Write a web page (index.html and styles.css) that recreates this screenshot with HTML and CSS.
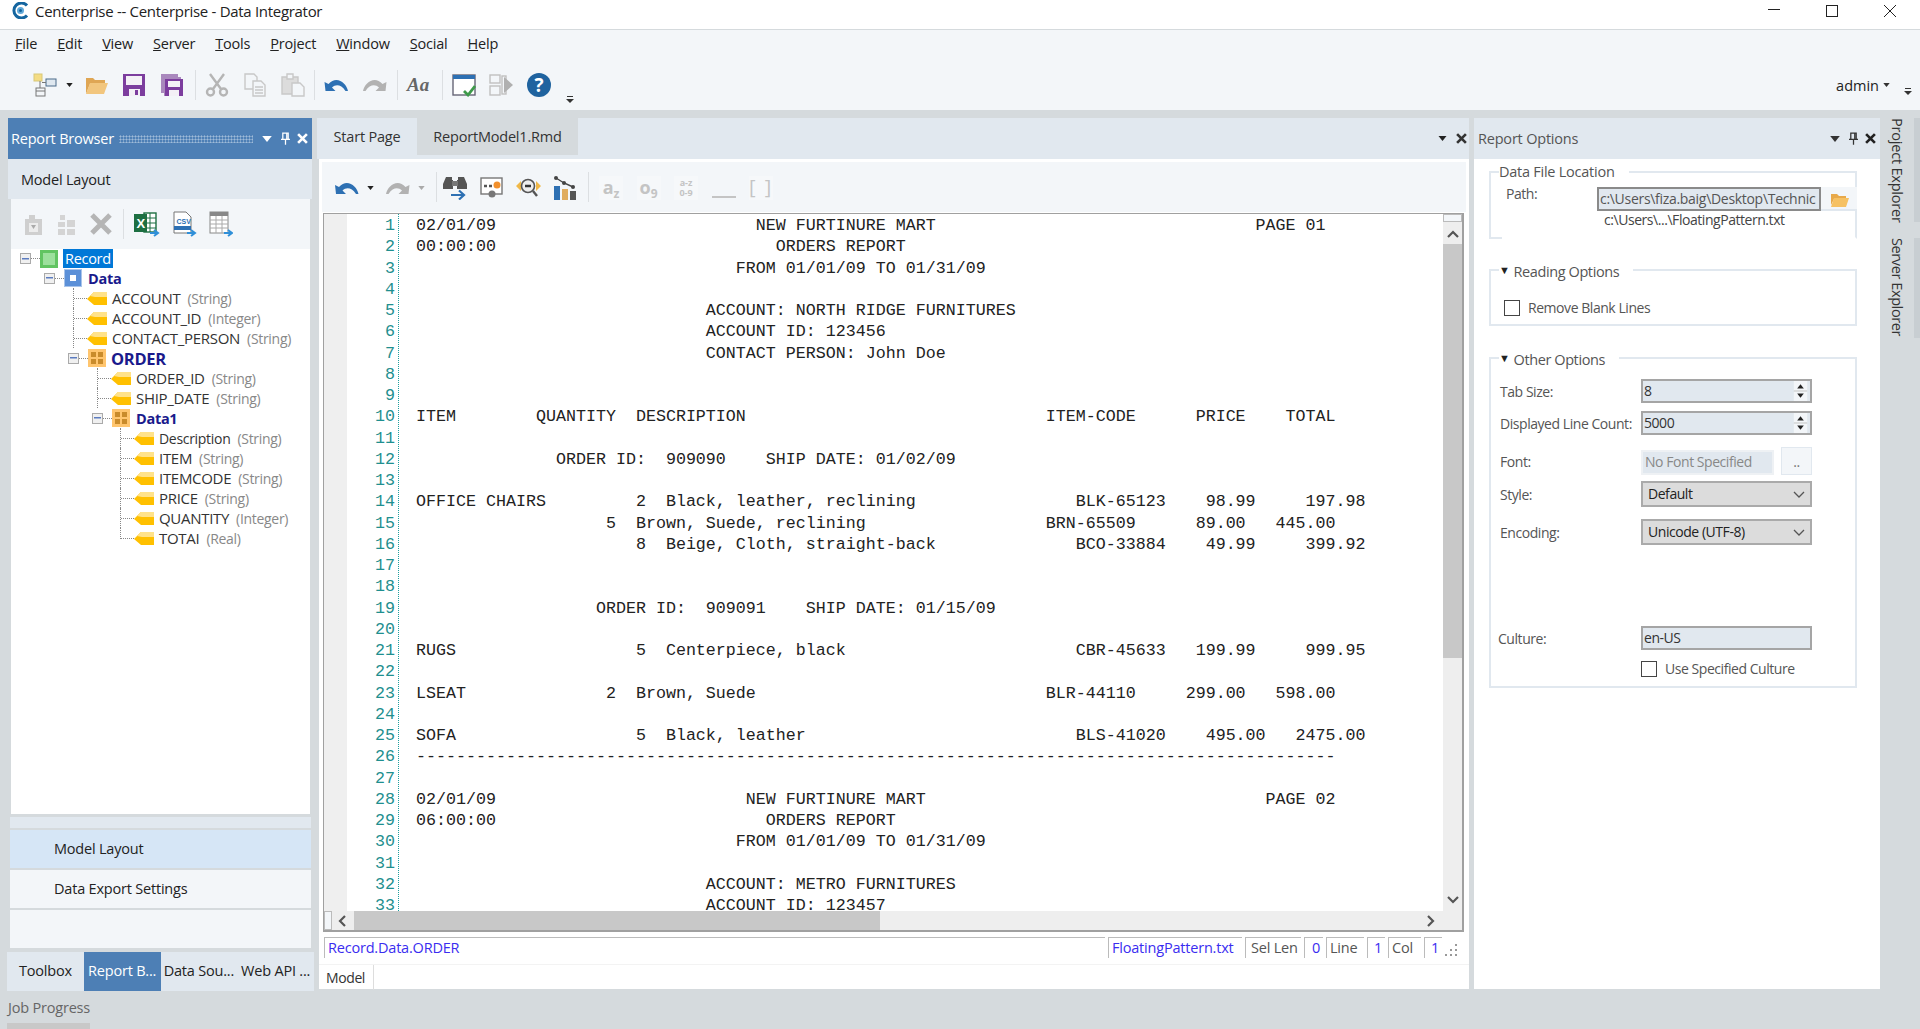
FILE: index.html
```html
<!doctype html>
<html lang="en">
    <head>
        <meta charset="UTF-8" />
        <title>Centerprise -- Centerprise - Data Integrator</title>
        <link rel="stylesheet" href="styles.css">
    </head>
    <body>
        <svg class="defs" width="0" height="0">
            <symbol id="tag" viewBox="0 0 20 14">
                <polygon points="0,8 7,1 20,1 20,14 7,14" fill="#ffc000" />
                <polygon points="3,5 7,1 20,1 20,6 8,6" fill="#ffe28a" />
            </symbol>
            <symbol id="grid" viewBox="0 0 18 18">
                <rect width="18" height="18" fill="#ffc56e" />
                <rect x="3" y="3" width="5" height="5" fill="#c98b2b" />
                <rect x="10" y="3" width="5" height="5" fill="#c98b2b" />
                <rect x="3" y="10" width="5" height="5" fill="#c98b2b" />
                <rect x="10" y="10" width="5" height="5" fill="#c98b2b" />
            </symbol>
            <symbol id="undo" viewBox="0 0 24 24">
                <path d="M0 9l1 9h10l-3.5-3.5c4-3.500 9-3 13.500 3.500h2.500C22 10 12 2 4 11z" />
            </symbol>
            <symbol id="redo" viewBox="0 0 24 24">
                <path d="M24 9l-1 9H13l3.500-3.500c-4-3.500-9-3-13.500 3.500H.5C2 10 12 2 20 11z" />
            </symbol>
            <symbol id="caret" viewBox="0 0 8 5">
                <polygon points="0,0 8,0 4,5" />
            </symbol>
            <symbol id="closex" viewBox="0 0 10 10">
                <path d="M1 1l8 8M9 1l-8 8" stroke="currentColor" stroke-width="2.4" fill="none" />
            </symbol>
            <symbol id="pin" viewBox="0 0 10 14">
                <path d="M2 1h6v7H2zM0 8h10M5 8v6M6.400 1v7" stroke="currentColor" stroke-width="1.400" fill="none" />
            </symbol>
            <symbol id="chev" viewBox="0 0 12 7">
                <path d="M1 1l5 5 5-5" stroke="#555" stroke-width="1.300" fill="none" />
            </symbol>
            <symbol id="spin" viewBox="0 0 16 24">
                <rect width="16" height="24" fill="#f3f6f9" />
                <path d="M0 12h16" stroke="#bbb" />
                <polygon points="4,9 12,9 8,4" fill="#222" />
                <polygon points="4,15 12,15 8,20" fill="#222" />
            </symbol>
        </svg>

        <header class="titlebar">
            <svg class="app-logo" width="19" height="17" viewBox="0 0 19 17">
                <path d="M16 3.500a7.500 7.500 0 1 0 0 10" stroke="#14659f" stroke-width="3" fill="none" />
                <circle cx="9.500" cy="8.500" r="3.500" fill="#5fa8d8" />
                <circle cx="9.500" cy="8.500" r="1.500" fill="#14659f" />
            </svg>
            <span class="app-title">Centerprise -- Centerprise - Data Integrator</span>
            <div class="window-controls">
                <svg width="12" height="12" viewBox="0 0 12 12"><path d="M0 4.500h12" stroke="#222" /></svg>
                <svg width="12" height="12" viewBox="0 0 12 12"><rect x=".5" y=".5" width="11" height="11" fill="none" stroke="#222" /></svg>
                <svg width="12" height="12" viewBox="0 0 12 12"><path d="M0 0l12 12M12 0L0 12" stroke="#222" /></svg>
            </div>
        </header>

        <nav class="menubar">
            <span><u>F</u>ile</span>
            <span><u>E</u>dit</span>
            <span><u>V</u>iew</span>
            <span><u>S</u>erver</span>
            <span><u>T</u>ools</span>
            <span><u>P</u>roject</span>
            <span><u>W</u>indow</span>
            <span><u>S</u>ocial</span>
            <span><u>H</u>elp</span>
        </nav>

        <div class="toolbar">
            <span class="grip"></span>
            <svg class="ti" width="24" height="24" viewBox="0 0 24 24">
                <rect x="1" y="1" width="8" height="7" fill="#f4dc84" stroke="#d8c878" />
                <rect x="13" y="6" width="10" height="7" fill="#dfe8f0" stroke="#4a6a8a" />
                <rect x="3" y="15" width="9" height="8" fill="#f3f6f9" stroke="#777" />
                <path d="M3 18h9M7 8v7M9 9.500h4" stroke="#777" />
            </svg>
            <svg class="ti-caret" width="7" height="4" fill="#222"><use href="#caret" /></svg>
            <svg class="ti" width="24" height="24" viewBox="0 0 24 24">
                <path d="M2 5h7l2 2h10v4H6L2 21z" fill="#dfa654" />
                <path d="M6 10h18l-4 11H2z" fill="#f2c67e" />
            </svg>
            <svg class="ti" width="24" height="24" viewBox="0 0 24 24">
                <path d="M1 1h22v22H1z" fill="#7c3d9e" />
                <rect x="4" y="3" width="16" height="9" fill="#f3f0f6" />
                <rect x="7" y="16" width="11" height="7" fill="#f3f0f6" />
                <rect x="13" y="17" width="3" height="5" fill="#7c3d9e" />
            </svg>
            <svg class="ti" width="24" height="24" viewBox="0 0 24 24">
                <path d="M1 1h17v3h3v3h2v16H4v-3H1z" fill="#a988bd" />
                <path d="M5 6h18v17H5z" fill="#7c3d9e" />
                <rect x="8" y="8" width="12" height="6" fill="#f3f0f6" />
                <rect x="9" y="17" width="10" height="6" fill="#f3f0f6" />
            </svg>
            <span class="sep"></span>
            <svg class="ti" width="24" height="24" viewBox="0 0 24 24" fill="none" stroke="#b5b5b5" stroke-width="2.400">
                <path d="M5 1l11 15M19 1L8 16" />
                <circle cx="5.500" cy="19" r="3.500" />
                <circle cx="18.500" cy="19" r="3.500" />
            </svg>
            <svg class="ti" width="24" height="24" viewBox="0 0 24 24" fill="#f3f6f9" stroke="#c8c8c8" stroke-width="1.400">
                <path d="M2 1h9l3 3v12H2z" />
                <path d="M10 8h8l4 4v11H10z" />
                <path d="M12 14h8M12 17h8M12 20h8" />
            </svg>
            <svg class="ti r12" width="24" height="24" viewBox="0 0 24 24" fill="#f3f6f9" stroke="#c8c8c8" stroke-width="1.400">
                <path d="M1 4h16v17H1z" fill="#dcdcdc" />
                <path d="M6 1h6v5H6z" />
                <path d="M11 10h8l4 4v9H11z" />
            </svg>
            <span class="sep"></span>
            <svg class="ti r13" width="25" height="24" fill="#2d70b3"><use href="#undo" /></svg>
            <svg class="ti r13" width="25" height="24" fill="#b2b2b2"><use href="#redo" /></svg>
            <span class="sep"></span>
            <span class="font-btn">Aa</span>
            <span class="sep"></span>
            <svg class="ti r13" width="24" height="24" viewBox="0 0 24 24">
                <rect x="1" y="2" width="22" height="20" fill="#fff" stroke="#667" stroke-width="1.400" />
                <rect x="1" y="2" width="22" height="4" fill="#2d70b3" />
                <path d="M12 18l4 4 7-9" stroke="#3d9a4a" stroke-width="2.800" fill="none" />
            </svg>
            <svg class="ti r13" width="24" height="24" viewBox="0 0 24 24" fill="#f3f6f9" stroke="#c0c0c0" stroke-width="1.400">
                <rect x="1" y="2" width="10" height="8" />
                <rect x="1" y="13" width="10" height="9" />
                <rect x="13" y="3" width="4" height="18" />
                <polygon points="15,4 24,12 15,20" fill="#b0b0b0" stroke="none" />
            </svg>
            <span class="help-btn">?</span>
            <svg class="overflow" width="8" height="8" viewBox="0 0 8 8"><path d="M1 0h6v1H1zM0 3h8L4 7z" fill="#333" /></svg>
            <div class="user-area">
                <span class="grip"></span>
                <span class="user-name">admin</span>
                <svg width="7" height="4" fill="#333"><use href="#caret" /></svg>
                <svg class="overflow" width="8" height="8" viewBox="0 0 8 8"><path d="M1 0h6v1H1zM0 3h8L4 7z" fill="#333" /></svg>
            </div>
        </div>

        <main class="workspace">
            <!-- left dock -->
            <section class="left-dock">
                <div class="dock-head active">
                    <span>Report Browser</span>
                    <span class="dots"></span>
                    <svg width="10" height="6" fill="#fff"><use href="#caret" /></svg>
                    <svg class="pin" width="9" height="13"><use href="#pin" /></svg>
                    <svg class="x" width="11" height="11"><use href="#closex" /></svg>
                </div>
                <div class="sub-head">Model Layout</div>
                <div class="left-toolbar">
                    <svg width="19" height="24" viewBox="0 0 19 24" fill="#cfcfcf">
                        <path d="M1 7h4V3h6v4h7v16H1z" />
                        <rect x="5" y="11" width="9" height="9" fill="#ececec" />
                        <polygon points="7,13 12,13 9.500,17" fill="#aaa" />
                    </svg>
                    <svg class="gap-l" width="19" height="24" viewBox="0 0 19 24" fill="#d4d4d4">
                        <path d="M3 8V3h5v5zM10 8h8v7h-8zM1 10h7v5H1zM1 17h7v6H1zM10 17h8v6h-8z" />
                    </svg>
                    <svg class="gap-l" width="22" height="22" viewBox="0 0 22 22" fill="none" stroke="#b5b5b5" stroke-width="5">
                        <path d="M2 2l18 18M20 2L2 20" />
                    </svg>
                    <span class="sep"></span>
                    <svg width="26" height="26" viewBox="0 0 26 26">
                        <rect x="10" y="2" width="12" height="19" fill="#fff" stroke="#1d6f42" stroke-width="1.400" />
                        <path d="M10 7h12M10 12h12M10 17h12M16 2v19" stroke="#1d6f42" />
                        <rect x="0" y="3" width="13" height="18" fill="#1d6f42" />
                        <text x="2.500" y="16.500" class="xl">X</text>
                        <path d="M16 22h7M20 19l4 3-4 3" stroke="#2f8fd8" stroke-width="2" fill="none" />
                    </svg>
                    <svg class="gap-m" width="25" height="26" viewBox="0 0 25 26">
                        <path d="M2 1h12l5 5v16H2z" fill="#fff" stroke="#777" />
                        <text x="4.500" y="13" class="csv">CSV</text>
                        <rect x="2" y="15" width="17" height="4" fill="#2d70b3" />
                        <path d="M15 22h7M19 19l4 3-4 3" stroke="#2f8fd8" stroke-width="2" fill="none" />
                    </svg>
                    <svg class="gap-m" width="24" height="26" viewBox="0 0 24 26">
                        <rect x="1" y="1" width="18" height="21" fill="#fff" stroke="#888" />
                        <rect x="1" y="1" width="18" height="4" fill="#888" />
                        <path d="M1 9h18M1 13h18M1 17h18M7 5v17M13 5v17" stroke="#aaa" />
                        <path d="M15 22h7M19 19l4 3-4 3" stroke="#2f8fd8" stroke-width="2" fill="none" />
                    </svg>
                </div>
                <div class="tree">
                    <div class="node lv0">
                        <span class="expander"></span><span class="link"></span>
                        <span class="box-icon green"></span>
                        <span class="node-name selected">Record</span>
                    </div>
                    <div class="node lv1">
                        <span class="expander"></span><span class="link"></span>
                        <span class="box-icon blue"></span>
                        <span class="node-name strong">Data</span>
                    </div>
                    <div class="node lv2"><span class="tick"></span><svg class="tag"><use href="#tag" /></svg><span class="field">ACCOUNT</span><span class="ftype">(String)</span></div>
                    <div class="node lv2"><span class="tick"></span><svg class="tag"><use href="#tag" /></svg><span class="field">ACCOUNT_ID</span><span class="ftype">(Integer)</span></div>
                    <div class="node lv2"><span class="tick"></span><svg class="tag"><use href="#tag" /></svg><span class="field">CONTACT_PERSON</span><span class="ftype">(String)</span></div>
                    <div class="node lv2b">
                        <span class="expander"></span><span class="link"></span>
                        <svg class="grid-icon"><use href="#grid" /></svg>
                        <span class="node-name strong caps">ORDER</span>
                    </div>
                    <div class="node lv3"><span class="tick"></span><svg class="tag"><use href="#tag" /></svg><span class="field">ORDER_ID</span><span class="ftype">(String)</span></div>
                    <div class="node lv3"><span class="tick"></span><svg class="tag"><use href="#tag" /></svg><span class="field">SHIP_DATE</span><span class="ftype">(String)</span></div>
                    <div class="node lv3b">
                        <span class="expander"></span><span class="link"></span>
                        <svg class="grid-icon"><use href="#grid" /></svg>
                        <span class="node-name strong">Data1</span>
                    </div>
                    <div class="node lv4"><span class="tick"></span><svg class="tag"><use href="#tag" /></svg><span class="field mixed">Description</span><span class="ftype">(String)</span></div>
                    <div class="node lv4"><span class="tick"></span><svg class="tag"><use href="#tag" /></svg><span class="field">ITEM</span><span class="ftype">(String)</span></div>
                    <div class="node lv4"><span class="tick"></span><svg class="tag"><use href="#tag" /></svg><span class="field">ITEMCODE</span><span class="ftype">(String)</span></div>
                    <div class="node lv4"><span class="tick"></span><svg class="tag"><use href="#tag" /></svg><span class="field">PRICE</span><span class="ftype">(String)</span></div>
                    <div class="node lv4"><span class="tick"></span><svg class="tag"><use href="#tag" /></svg><span class="field">QUANTITY</span><span class="ftype">(Integer)</span></div>
                    <div class="node lv4"><span class="tick last"></span><svg class="tag"><use href="#tag" /></svg><span class="field">TOTAI</span><span class="ftype">(Real)</span></div>
                </div>
                <div class="split-bar"></div>
                <div class="section-btn current">Model Layout</div>
                <div class="section-btn">Data Export Settings</div>
                <div class="section-btn"></div>
                <div class="dock-tabs">
                    <span class="dock-tab">Toolbox</span>
                    <span class="dock-tab on">Report B...</span>
                    <span class="dock-tab">Data Sou...</span>
                    <span class="dock-tab">Web API ...</span>
                </div>
            </section>

            <!-- editor -->
            <section class="center">
                <div class="doc-tabs">
                    <span class="doc-tab">Start Page</span>
                    <span class="doc-tab cur">ReportModel1.Rmd</span>
                    <svg class="tab-caret" width="9" height="5" fill="#222"><use href="#caret" /></svg>
                    <svg class="tab-close" width="11" height="11"><use href="#closex" /></svg>
                </div>
                <div class="doc-body">
                    <div class="edit-toolbar">
                        <svg width="24" height="24" fill="#2d70b3"><use href="#undo" /></svg>
                        <svg class="small-caret" width="7" height="4" fill="#222"><use href="#caret" /></svg>
                        <svg width="25" height="24" fill="#b2b2b2"><use href="#redo" /></svg>
                        <svg class="small-caret" width="7" height="4" fill="#aaa"><use href="#caret" /></svg>
                        <span class="sep first"></span>
                        <svg width="24" height="24" viewBox="0 0 24 24">
                            <path d="M3 1h6v3h1v9H0V8zM15 1h6l3 7v5H14V4h1z" fill="#555" />
                            <rect x="9" y="5" width="6" height="5" fill="#777" />
                            <path d="M8 19h13M16 14.500l5 4.500-5 4.500" stroke="#2d70b3" stroke-width="2.200" fill="none" />
                        </svg>
                        <svg class="e-gap" width="23" height="22" viewBox="0 0 23 22">
                            <rect x="1" y="1" width="21" height="16" fill="#fff" stroke="#777" stroke-width="1.400" />
                            <path d="M4 9h9" stroke="#555" stroke-width="2.400" stroke-dasharray="3 2" />
                            <circle cx="17" cy="8" r="3.500" fill="#f2902c" />
                            <circle cx="12" cy="17" r="3.500" fill="#777" />
                        </svg>
                        <svg class="e-gap" width="25" height="22" viewBox="0 0 25 22">
                            <path d="M0 9l5-5v10zM25 9l-5-5v10z" fill="#f0b848" />
                            <circle cx="12" cy="9" r="6.500" fill="#eee" stroke="#555" stroke-width="1.600" />
                            <path d="M9 9h6" stroke="#333" stroke-width="2.500" />
                            <path d="M17 14l4 5" stroke="#555" stroke-width="2.400" />
                        </svg>
                        <svg class="e-gap" width="23" height="24" viewBox="0 0 23 24">
                            <rect x="0" y="10" width="6" height="14" fill="#2d70b3" />
                            <rect x="8" y="13" width="6" height="11" fill="#e0ac5e" />
                            <rect x="16" y="15" width="6" height="9" fill="#555" />
                            <path d="M2 2l8 5 9 4" stroke="#444" stroke-width="1.400" fill="none" />
                            <circle cx="2" cy="2" r="2" fill="#444" />
                            <circle cx="10" cy="7" r="2" fill="#444" />
                            <circle cx="19" cy="11" r="2" fill="#444" />
                        </svg>
                        <span class="sep"></span>
                        <span class="case-btn">a<sub>z</sub></span>
                        <span class="case-btn">o<sub>9</sub></span>
                        <span class="case-btn tiny">a-z<br>0-9</span>
                        <span class="case-btn under"></span>
                        <span class="case-btn brackets">[ ]</span>
                    </div>
                    <div class="editor">
                        <div class="editor-main">
                            <div class="bookmark-col"></div>
                            <pre class="gutter">1
2
3
4
5
6
7
8
9
10
11
12
13
14
15
16
17
18
19
20
21
22
23
24
25
26
27
28
29
30
31
32
33</pre>
                            <pre class="code">02/01/09                          NEW FURTINURE MART                                PAGE 01
00:00:00                            ORDERS REPORT
                                FROM 01/01/09 TO 01/31/09

                             ACCOUNT: NORTH RIDGE FURNITURES
                             ACCOUNT ID: 123456
                             CONTACT PERSON: John Doe


ITEM        QUANTITY  DESCRIPTION                              ITEM-CODE      PRICE    TOTAL

              ORDER ID:  909090    SHIP DATE: 01/02/09

OFFICE CHAIRS         2  Black, leather, reclining                BLK-65123    98.99     197.98
                   5  Brown, Suede, reclining                  BRN-65509      89.00   445.00
                      8  Beige, Cloth, straight-back              BCO-33884    49.99     399.92


                  ORDER ID:  909091    SHIP DATE: 01/15/09

RUGS                  5  Centerpiece, black                       CBR-45633   199.99     999.95

LSEAT              2  Brown, Suede                             BLR-44110     299.00   598.00

SOFA                  5  Black, leather                           BLS-41020    495.00   2475.00
--------------------------------------------------------------------------------------------

02/01/09                         NEW FURTINURE MART                                  PAGE 02
06:00:00                           ORDERS REPORT
                                FROM 01/01/09 TO 01/31/09

                             ACCOUNT: METRO FURNITURES
                             ACCOUNT ID: 123457</pre>
                            <div class="vscroll">
                                <span class="scroll-stub"></span>
                                <svg class="arrow-up" width="14" height="9" viewBox="0 0 14 9"><path d="M2 7l5-5 5 5" stroke="#555" stroke-width="2.200" fill="none" /></svg>
                                <span class="v-thumb"></span>
                                <svg class="arrow-down" width="14" height="9" viewBox="0 0 14 9"><path d="M2 2l5 5 5-5" stroke="#555" stroke-width="2.200" fill="none" /></svg>
                            </div>
                        </div>
                        <div class="hscroll">
                            <span class="scroll-stub-h"></span>
                            <svg width="9" height="14" viewBox="0 0 9 14"><path d="M7 2L2 7l5 5" stroke="#555" stroke-width="2.200" fill="none" /></svg>
                            <span class="h-thumb"></span>
                            <svg class="arrow-right" width="9" height="14" viewBox="0 0 9 14"><path d="M2 2l5 5-5 5" stroke="#555" stroke-width="2.200" fill="none" /></svg>
                        </div>
                    </div>
                    <div class="statusbar">
                        <span class="cell path">Record.Data.ORDER</span>
                        <span class="cell file">FloatingPattern.txt</span>
                        <span class="cell lbl sel">Sel Len</span>
                        <span class="cell val w0">0</span>
                        <span class="cell lbl ln">Line</span>
                        <span class="cell val w1">1</span>
                        <span class="cell lbl cl">Col</span>
                        <span class="cell val w1">1</span>
                        <svg class="resize-grip" width="13" height="13" viewBox="0 0 13 13" fill="#999">
                            <rect x="10" y="1" width="2" height="2" />
                            <rect x="5" y="6" width="2" height="2" /><rect x="10" y="6" width="2" height="2" />
                            <rect x="0" y="11" width="2" height="2" /><rect x="5" y="11" width="2" height="2" /><rect x="10" y="11" width="2" height="2" />
                        </svg>
                    </div>
                    <div class="model-tabs"><span class="model-tab">Model</span></div>
                </div>
            </section>

            <!-- options -->
            <section class="right-dock">
                <div class="dock-head">
                    <span>Report Options</span>
                    <span class="spacer"></span>
                    <svg width="10" height="6" fill="#333"><use href="#caret" /></svg>
                    <svg class="pin" width="9" height="13"><use href="#pin" /></svg>
                    <svg class="x" width="11" height="11"><use href="#closex" /></svg>
                </div>
                <div class="options">
                    <fieldset class="group file-group">
                        <legend>Data File Location</legend>
                        <div class="path-row">
                            <label class="path-label">Path:</label>
                            <span class="path-input">c:\Users\fiza.baig\Desktop\Technic</span>
                            <span class="browse">
                                <svg width="19" height="15" viewBox="0 0 19 15">
                                    <path d="M1 2h6l2 2h7v3H4L1 13z" fill="#e8a94a" />
                                    <path d="M4 6h15l-3 9H1z" fill="#f6c163" />
                                </svg>
                            </span>
                        </div>
                        <div class="short-path">c:\Users\...\FloatingPattern.txt</div>
                    </fieldset>

                    <fieldset class="group reading-group">
                        <legend><span class="tri">▼</span>Reading Options</legend>
                        <div class="check-row">
                            <span class="check"></span>
                            <span>Remove Blank Lines</span>
                        </div>
                    </fieldset>

                    <fieldset class="group other-group">
                        <legend><span class="tri">▼</span>Other Options</legend>
                        <div class="form-row">
                            <label>Tab Size:</label>
                            <span class="input spin-input">8<svg class="spinner" width="17" height="20"><use href="#spin" /></svg></span>
                        </div>
                        <div class="form-row r-line">
                            <label>Displayed Line Count:</label>
                            <span class="input spin-input">5000<svg class="spinner" width="17" height="20"><use href="#spin" /></svg></span>
                        </div>
                        <div class="form-row r-font">
                            <label>Font:</label>
                            <span class="font-input">No Font Specified</span>
                            <span class="dots-btn">..</span>
                        </div>
                        <div class="form-row r-style">
                            <label>Style:</label>
                            <span class="select">Default<svg width="12" height="7"><use href="#chev" /></svg></span>
                        </div>
                        <div class="form-row r-enc">
                            <label>Encoding:</label>
                            <span class="select">Unicode (UTF-8)<svg width="12" height="7"><use href="#chev" /></svg></span>
                        </div>
                        <div class="form-row r-cult">
                            <label class="tight">Culture:</label>
                            <span class="input">en-US</span>
                        </div>
                        <div class="form-row r-use">
                            <label></label>
                            <div class="check-row">
                                <span class="check"></span>
                                <span>Use Specified Culture</span>
                            </div>
                        </div>
                    </fieldset>
                </div>
            </section>

            <aside class="side-tabs">
                <span class="side-tab project">Project Explorer</span>
                <span class="side-tab server">Server Explorer</span>
            </aside>
        </main>

        <footer class="job-progress">
            <span class="job-label">Job Progress</span>
            <span class="job-bar"></span>
        </footer>
    </body>
</html>
```
FILE: styles.css
```css
* {
    box-sizing: border-box;
}

body {
    margin: 0;
    width: 1920px;
    height: 1029px;
    overflow: hidden;
    display: flex;
    flex-direction: column;
    background: #d5dadd;
    color: #222;
    font-family: "Open Sans", "Noto Sans", sans-serif;
    font-size: 14px;
}

.defs {
    position: absolute;
}

/* title bar */

.titlebar {
    height: 29px;
    flex: none;
    background: #fff;
    display: flex;
    align-items: center;
    padding: 0 24px 8px 11px;
}

.app-title {
    margin-left: 5px;
    font-size: 15px;
    letter-spacing: -0.3px;
    color: #222;
}

.window-controls {
    margin-left: auto;
    display: flex;
    gap: 46px;
}

/* menu and main toolbar */

.menubar {
    height: 31px;
    flex: none;
    background: #f3f6f9;
    border-top: 1px solid #d5dadd;
    display: flex;
    align-items: center;
    gap: 20px;
    padding: 0 0 3px 15px;
    font-size: 14.5px;
    letter-spacing: -0.2px;
}

.toolbar {
    height: 50px;
    flex: none;
    background: #f3f6f9;
    display: flex;
    align-items: center;
    padding: 0 0 0 17px;
}

.grip {
    width: 4px;
    height: 30px;
    background-image: radial-gradient(#c4c8cc 40%, transparent 45%);
    background-size: 2px 2px;
}

.ti {
    flex: none;
    margin-right: 14px;
}

.ti.r12 {
    margin-right: 12px;
}

.ti.r13 {
    margin-right: 13px;
}

.toolbar > .ti:first-of-type {
    margin-left: 12px;
    margin-right: 9px;
}

.ti-caret {
    margin-right: 11px;
}

.sep {
    width: 1px;
    height: 30px;
    background: #dcdfe2;
    margin: 0 9px 0 -3px;
    flex: none;
}

.font-btn {
    width: 24px;
    margin-right: 14px;
    font: italic bold 19px "Liberation Serif", serif;
    color: #666;
}

.help-btn {
    width: 24px;
    height: 24px;
    border-radius: 50%;
    background: #1f639f;
    color: #fff;
    font-weight: 700;
    font-size: 19px;
    line-height: 24px;
    text-align: center;
    margin-left: 1px;
}

.overflow {
    margin: 30px 0 0 15px;
    flex: none;
}

.user-area {
    margin-left: auto;
    display: flex;
    align-items: center;
    padding-right: 8px;
}

.user-name {
    margin-left: 11px;
    margin-right: 4px;
    font-size: 14.5px;
}

.user-area .overflow {
    margin: 14px 0 0 14px;
}

/* workspace */

.workspace {
    flex: none;
    height: 883px;
    padding: 8px 0 0 7px;
    display: flex;
}

.left-dock {
    width: 307px;
    height: 873px;
    flex: none;
    display: flex;
    flex-direction: column;
    align-items: stretch;
}

.dock-head {
    height: 41px;
    flex: none;
    background: #e1e8ef;
    display: flex;
    align-items: center;
    padding: 0 4px 0 4px;
    font-size: 14.5px;
    color: #555;
    letter-spacing: -0.2px;
    white-space: nowrap;
}

.dock-head.active {
    background: #4d7fb5;
    color: #fff;
    margin-left: 1px;
    margin-right: 2px;
    padding-left: 3px;
}

.dock-head .dots {
    flex: 1;
    height: 8px;
    margin: 0 9px 0 5px;
    background-image: radial-gradient(#9fbbd8 45%, transparent 50%);
    background-size: 3px 3px;
}

.dock-head .spacer {
    flex: 1;
}

.dock-head .pin {
    margin: 0 5px 0 9px;
    color: #333;
}

.dock-head .x {
    margin-left: 2px;
    color: #222;
}

.dock-head svg {
    flex: none;
}

.active .x,
.active .pin {
    color: #fff;
}

.sub-head {
    height: 40px;
    flex: none;
    margin: 0 2px 0 1px;
    background: #e1e8ef;
    padding: 0 0 0 13px;
    line-height: 41px;
    font-size: 14.5px;
    letter-spacing: -0.2px;
}

.left-toolbar {
    height: 50px;
    flex: none;
    margin: 0 4px;
    background: #f3f6f9;
    display: flex;
    align-items: center;
    padding-left: 13px;
}

.left-toolbar .gap-l {
    margin-left: 14px;
}

.left-toolbar .gap-m {
    margin-left: 12px;
}

.left-toolbar .sep {
    margin: 0 10px 0 11px;
}

.xl {
    font: bold 13px "Liberation Sans", sans-serif;
    fill: #fff;
}

.csv {
    font: bold 7px "Liberation Sans", sans-serif;
    fill: #2d70b3;
}

/* tree */

.tree {
    height: 565px;
    flex: none;
    margin: 0 4px;
    background: #fff;
}

.node {
    height: 20px;
    display: flex;
    align-items: center;
    font-size: 14px;
    letter-spacing: -0.3px;
    white-space: nowrap;
}

.lv0 { padding-left: 9px; height: 19px; }
.lv1 { padding-left: 33px; }
.lv2 { padding-left: 62px; }
.lv2b { padding-left: 57px; }
.lv3 { padding-left: 86px; }
.lv3b { padding-left: 81px; }
.lv4 { padding-left: 109px; }

.expander {
    width: 11px;
    height: 11px;
    flex: none;
    border: 1px solid #aaa;
    background: linear-gradient(#5c7cc0, #5c7cc0) center / 7px 1.5px no-repeat #f0f0f0;
}

.link {
    width: 9px;
    border-top: 1px dotted #888;
    flex: none;
}

.box-icon {
    width: 18px;
    height: 18px;
    flex: none;
}

.box-icon.green {
    background: #9de09d;
    border: 3px solid #62c462;
}

.box-icon.blue {
    background: linear-gradient(#fff, #fff) center / 6px 6px no-repeat #5c90d8;
    border: 1px solid #a9c4ea;
}

.grid-icon {
    width: 18px;
    height: 18px;
    flex: none;
}

.node-name {
    margin-left: 5px;
    padding: 0 1px;
    font-size: 14.5px;
}

.node-name.selected {
    background: #0078d7;
    color: #fff;
    line-height: 19px;
    padding: 0 2px;
}

.node-name.strong {
    color: #1a1a8c;
    font-weight: 700;
}

.node-name.caps {
    font-size: 16.5px;
    margin-left: 4px;
}

.tick {
    width: 14px;
    height: 20px;
    flex: none;
    border-left: 1px dotted #888;
    align-self: flex-start;
}

.tick::after {
    content: "";
    display: block;
    height: 10px;
    border-bottom: 1px dotted #888;
}

.tick.last {
    height: 11px;
}

.tag {
    width: 20px;
    height: 14px;
    flex: none;
    margin-right: 5px;
}

.field {
    color: #333;
    font-size: 15px;
}

.field.mixed {
    font-size: 14px;
}

.ftype {
    color: #888;
    margin-left: 7px;
}

/* accordion buttons and dock tabs */

.split-bar {
    height: 11px;
    flex: none;
    margin: 3px 3px 2px;
    background: #e1e8ef;
}

.section-btn {
    height: 38px;
    flex: none;
    margin: 0 3px 2px;
    background: #f3f6f9;
    padding-left: 44px;
    line-height: 38px;
    font-size: 14.5px;
    letter-spacing: -0.2px;
}

.section-btn.current {
    background: #d6e6f6;
}

.dock-tabs {
    height: 39px;
    flex: none;
    margin-top: 2px;
    background: #e1e8ef;
    display: flex;
    font-size: 14.5px;
    letter-spacing: -0.2px;
}

.dock-tab {
    width: 77px;
    line-height: 37px;
    text-align: center;
    white-space: nowrap;
    overflow: hidden;
}

.dock-tab.on {
    background: #4d7fb5;
    color: #fff;
}

/* centre */

.center {
    width: 1152px;
    height: 871px;
    margin-left: 3px;
    flex: none;
    display: flex;
    flex-direction: column;
}

.doc-tabs {
    height: 41px;
    flex: none;
    background: #e1e8ef;
    display: flex;
    align-items: flex-start;
    font-size: 14.5px;
    letter-spacing: -0.2px;
    color: #333;
}

.doc-tab {
    height: 37px;
    line-height: 38px;
    width: 100px;
    text-align: center;
}

.doc-tab.cur {
    width: 161px;
    background: #d5dadd;
}

.tab-caret {
    margin: 18px 0 0 auto;
}

.tab-close {
    margin: 15px 2px 0 9px;
}

.doc-body {
    flex: 1;
    background: #fff;
    margin-left: 2px;
    padding-top: 3px;
    display: flex;
    flex-direction: column;
    min-height: 0;
}

.edit-toolbar {
    height: 50px;
    flex: none;
    margin: 0 3px;
    background: #f3f6f9;
    display: flex;
    align-items: center;
    padding: 2px 0 0 13px;
}

.small-caret {
    margin: 0 11px 0 8px;
}

.edit-toolbar .sep {
    margin: -2px 10px 0 0;
}

.edit-toolbar .sep.first {
    margin-right: 6px;
}

.edit-toolbar .e-gap {
    margin-left: 13px;
}

.edit-toolbar > svg:nth-of-type(8) {
    margin-right: 11px;
}

.case-btn {
    width: 24px;
    height: 24px;
    flex: none;
    margin-right: 13.5px;
    text-align: center;
    color: #c4c4c4;
    font-size: 18px;
    font-weight: 700;
    line-height: 22px;
    background: #f6f8fa;
    overflow: hidden;
}

.case-btn sub {
    font-size: 12px;
    vertical-align: -4px;
    line-height: 0;
}

.case-btn.tiny {
    font-size: 9px;
    line-height: 10px;
    padding-top: 2px;
}

.case-btn.under {
    border-bottom: 2px solid #c4c4c4;
    height: 16px;
    margin-top: 4px;
    background: none;
}

.case-btn.brackets {
    font-size: 20px;
    font-weight: 400;
    letter-spacing: 2px;
    white-space: nowrap;
}

/* editor */

.editor {
    height: 719px;
    flex: none;
    margin: 1px 5px 0 4px;
    border: 1px solid #a0a0a0;
    border-width: 1px 2px 2px 1px;
    display: flex;
    flex-direction: column;
    background: #fff;
}

.editor-main {
    flex: 1;
    display: flex;
    min-height: 0;
    overflow: hidden;
}

.bookmark-col {
    width: 23px;
    flex: none;
    background: #efefef;
}

.gutter,
.code {
    margin: 0;
    font: 16.67px/21.25px "Liberation Mono", monospace;
    padding-top: 1px;
    overflow: hidden;
}

.gutter {
    width: 52px;
    flex: none;
    padding-right: 3px;
    text-align: right;
    color: #1f8f8f;
    border-right: 1px dotted #1f9f9f;
}

.code {
    flex: 1;
    padding-left: 17px;
    color: #222;
}

.vscroll {
    width: 19px;
    flex: none;
    background: #eee;
    display: flex;
    flex-direction: column;
    align-items: center;
}

.scroll-stub {
    width: 100%;
    height: 8px;
    background: #f3f6f9;
    border: 1px solid #bbb;
    flex: none;
}

.arrow-up {
    margin: 8px 0 5px;
    flex: none;
}

.v-thumb {
    width: 100%;
    height: 414px;
    background: #c8c8c8;
    flex: none;
}

.arrow-down {
    margin-top: auto;
    margin-bottom: 7px;
}

.hscroll {
    height: 19px;
    flex: none;
    background: #eee;
    display: flex;
    align-items: center;
}

.scroll-stub-h {
    width: 8px;
    height: 100%;
    background: #f3f6f9;
    border: 1px solid #bbb;
    margin-right: 6px;
}

.h-thumb {
    width: 526px;
    height: 100%;
    background: #c8c8c8;
    margin-left: 7px;
}

.arrow-right {
    margin-left: auto;
    margin-right: 27px;
}

/* status bar */

.statusbar {
    height: 21px;
    flex: none;
    margin: 5px 5px 0 5px;
    display: flex;
    align-items: stretch;
    gap: 3px;
    font-size: 14.5px;
    letter-spacing: -0.2px;
    line-height: 20px;
    color: #555;
}

.cell {
    border: 1px solid #bbb;
    border-width: 1px 0 0 1px;
    padding: 0 3px;
    white-space: nowrap;
}

.cell.path {
    width: 781px;
    color: #3a2df0;
}

.cell.file {
    width: 134px;
    color: #3a2df0;
}

.cell.lbl.sel { width: 56px; padding-left: 5px; }
.cell.lbl.ln { width: 38px; }
.cell.lbl.cl { width: 33px; }

.cell.val {
    text-align: right;
    color: #3a2df0;
}

.cell.val.w0 { width: 19px; }
.cell.val.w1 { width: 18px; }

.resize-grip {
    margin-top: 6px;
    flex: none;
}

.model-tabs {
    height: 26px;
    margin-top: 6px;
    flex: none;
    border-top: 1px solid #f3f3f3;
    display: flex;
}

.model-tab {
    width: 55px;
    padding-left: 7px;
    font-size: 14px;
    letter-spacing: -0.4px;
    line-height: 26px;
    border-right: 1px solid #ddd;
    color: #333;
}

/* right dock */

.right-dock {
    width: 406px;
    height: 871px;
    flex: none;
    margin-left: 5px;
    background: #fff;
    display: flex;
    flex-direction: column;
}

.options {
    padding: 3px 23px 0 15px;
    font-size: 14px;
    letter-spacing: -0.45px;
    color: #555;
}

.group {
    margin: 0;
    min-width: 0;
    border: 2px solid #e1e8ef;
    padding: 0;
}

.group legend {
    padding: 0 14px 0 0;
    height: 20px;
    line-height: 20px;
    font-size: 14.5px;
    letter-spacing: -0.4px;
    white-space: nowrap;
}

.tri {
    font-size: 11px;
    color: #222;
    margin-right: 4px;
    vertical-align: 3px;
}

.file-group {
    height: 77px;
    border-bottom-color: transparent;
    position: relative;
    padding: 5px 0 0 0;
}

.file-group legend {
    margin-left: 8px;
    letter-spacing: -0.25px;
}

.file-group::after {
    content: "";
    position: absolute;
    left: -2px;
    bottom: -2px;
    width: 13px;
    height: 2px;
    background: #e1e8ef;
}

.path-row {
    display: flex;
    align-items: flex-start;
}

.path-label {
    width: 106px;
    padding-left: 15px;
    margin-top: -3px;
    flex: none;
}

.path-input {
    width: 224px;
    height: 24px;
    flex: none;
    border: 2px solid #8a8a8a;
    background: #e1e8ef;
    font-size: 14px;
    letter-spacing: -0.3px;
    line-height: 20px;
    padding-left: 1px;
    white-space: nowrap;
    overflow: hidden;
}

.browse {
    flex: 1;
    height: 24px;
    background: #f3f6f9;
    border-bottom: 2px solid #e1e8ef;
    text-align: center;
    padding-top: 5px;
    margin-right: -2px;
}

.short-path {
    margin: 0 0 0 113px;
    line-height: 18px;
    color: #444;
}

.reading-group {
    margin-top: 21px;
    height: 66px;
    padding: 18px 0 0 13px;
}

.reading-group legend {
    margin-left: -5px;
}

.other-group {
    margin-top: 22px;
    height: 340px;
    padding: 11px 0 0 9px;
}

.other-group legend {
    margin-left: -1px;
}

.check-row {
    display: flex;
    align-items: center;
    gap: 8px;
}

.check {
    width: 16px;
    height: 16px;
    flex: none;
    border: 1px solid #444;
    background: #fff;
}

.form-row {
    display: flex;
    align-items: center;
    white-space: nowrap;
}

.form-row label {
    width: 141px;
    flex: none;
}

.form-row label.tight {
    margin-left: -2px;
    width: 143px;
}

.input {
    width: 171px;
    height: 24px;
    flex: none;
    background: #e1e8ef;
    border: 2px solid #a5a5a5;
    padding-left: 1px;
    line-height: 19px;
    color: #333;
    display: flex;
    justify-content: space-between;
}

.spinner {
    flex: none;
    margin-right: 1px;
}

.r-line { margin-top: 8px; }
.r-font { margin-top: 12px; height: 28px; }
.r-style { margin-top: 6px; }
.r-enc { margin-top: 12px; }
.r-cult { margin-top: 81px; }
.r-use { margin-top: 9px; }

.font-input {
    width: 133px;
    height: 25px;
    flex: none;
    margin-top: 3px;
    background: #e1e8ef;
    border: 2px solid #eef1f4;
    padding-left: 2px;
    line-height: 20px;
    color: #888;
}

.dots-btn {
    width: 31px;
    height: 28px;
    flex: none;
    margin-left: 7px;
    background: #f3f6f9;
    border: 1px solid #e1e8ef;
    text-align: center;
    line-height: 28px;
    color: #777;
}

.select {
    width: 171px;
    height: 26px;
    flex: none;
    background: #dcdcdc;
    border: 2px solid #aaa;
    padding: 0 5px;
    line-height: 22px;
    color: #222;
    display: flex;
    justify-content: space-between;
    align-items: center;
}

/* side tabs */

.side-tabs {
    width: 40px;
    flex: none;
    display: flex;
    flex-direction: column;
    align-items: flex-end;
    gap: 16px;
}

.side-tab {
    writing-mode: vertical-rl;
    width: 33px;
    text-align: left;
    padding-right: 7px;
    font-size: 14.5px;
    letter-spacing: -0.2px;
    color: #333;
    border-right: 6px solid #c8ced2;
    white-space: nowrap;
}

.side-tab.project { height: 104px; }
.side-tab.server { height: 100px; letter-spacing: -0.4px; }

/* bottom */

.job-progress {
    flex: 1;
    padding: 5px 0 0 7px;
    display: flex;
    flex-direction: column;
    font-size: 14.5px;
    letter-spacing: -0.2px;
    color: #666;
}

.job-label {
    margin-left: 1px;
}

.job-bar {
    width: 83px;
    height: 6px;
    margin-top: auto;
    background: #c8c8c8;
}
```
